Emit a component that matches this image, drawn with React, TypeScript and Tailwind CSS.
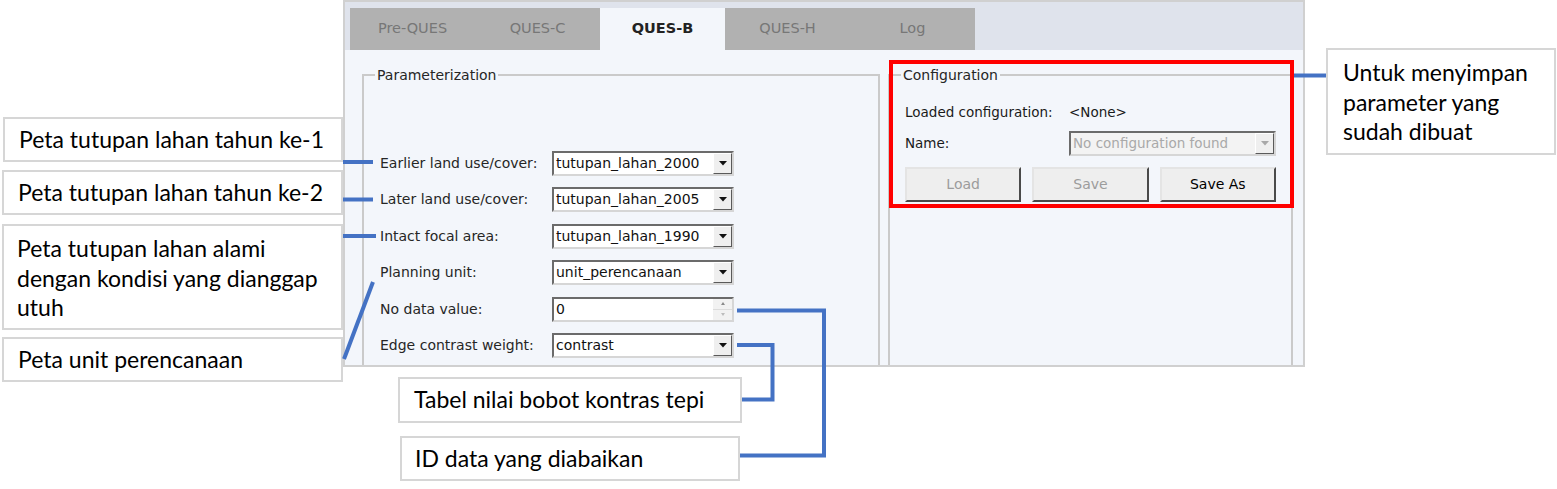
import React from "react";

function Arrow({ disabled }: { disabled?: boolean }) {
  return (
    <svg width="8" height="5" viewBox="0 0 8 5">
      <path d="M0 0H8L4 4.5Z" fill={disabled ? "#a8a8a8" : "#111"} />
    </svg>
  );
}

function Combo({ value, disabled, wide }: { value: string; disabled?: boolean; wide?: boolean }) {
  return (
    <div
      className={`flex h-[25px] border-2 border-t-[#6b6b6b] border-l-[#6b6b6b] border-r-[#d6d6d6] border-b-[#d6d6d6] ${
        wide ? "w-[207px]" : "w-[182px]"
      } ${disabled ? "bg-[#f3f3f3]" : "bg-white"}`}
    >
      <div
        className={`flex-1 pl-[2px] leading-[21px] whitespace-nowrap overflow-hidden ${
          disabled ? "text-[13.5px] text-[#a9a9a9]" : "text-[14px] text-[#111]"
        }`}
      >
        {value}
      </div>
      <div className="w-[19px] h-full flex items-center justify-center bg-[#efefef] border border-t-white border-l-white border-r-[#5a5a5a] border-b-[#5a5a5a]">
        <Arrow disabled={disabled} />
      </div>
    </div>
  );
}

function Spin({ value }: { value: string }) {
  return (
    <div className="flex h-[25px] w-[182px] border-2 border-t-[#6b6b6b] border-l-[#6b6b6b] border-r-[#d6d6d6] border-b-[#d6d6d6] bg-white">
      <div className="flex-1 pl-[2px] leading-[21px] text-[14px] text-[#111]">{value}</div>
      <div className="w-[19px] h-full flex flex-col bg-[#f2f2f2]">
        <div className="flex-1 flex items-center justify-center border-b border-[#dcdcdc]">
          <svg width="4" height="3" viewBox="0 0 4 3">
            <path d="M0 3H4L2 0Z" fill="#8a8a8a" />
          </svg>
        </div>
        <div className="flex-1 flex items-center justify-center">
          <svg width="4" height="3" viewBox="0 0 4 3">
            <path d="M0 0H4L2 3Z" fill="#bdbdbd" />
          </svg>
        </div>
      </div>
    </div>
  );
}

function Row({ label, children }: { label: string; children: React.ReactNode }) {
  return (
    <div className="flex items-center h-[24px]">
      <div className="w-[172px] text-[14px] text-[#262626] whitespace-nowrap">{label}</div>
      {children}
    </div>
  );
}

function Btn({ label, disabled }: { label: string; disabled?: boolean }) {
  return (
    <div
      className={`flex-1 h-[35px] flex items-center justify-center bg-[#eeeeee] border-2 border-t-[#e4e4e4] border-l-[#e4e4e4] border-r-[#4a4a4a] border-b-[#4a4a4a] text-[14px] ${
        disabled ? "text-[#9c9c9c]" : "text-black"
      }`}
    >
      {label}
    </div>
  );
}

const tabs = ["Pre-QUES", "QUES-C", "QUES-B", "QUES-H", "Log"];

export default function App() {
  const callout = "absolute border-2 border-[#d6d6d6] bg-white text-black text-[23px] leading-[29.5px]";
  return (
    <div
      className="relative w-[1557px] h-[489px] bg-white overflow-hidden"
      style={{ fontFamily: "'DejaVu Sans', sans-serif" }}
    >
      {/* Application window */}
      <div className="ml-[343px] w-[962px] h-[367px] border-2 border-[#d0d0d0] flex flex-col">
        <div className="h-[48px] bg-[#dfe3ec] pl-[5px] pt-[6px] flex">
          {tabs.map((t) => (
            <div
              key={t}
              className={`w-[125px] h-[42px] flex items-center justify-center text-[14.5px] ${
                t === "QUES-B" ? "bg-[#f3f6fb] font-bold text-[#222]" : "bg-[#b1b1b1] text-[#777]"
              }`}
            >
              {t}
            </div>
          ))}
        </div>
        <div className="h-[315px] bg-[#f3f6fb] overflow-hidden flex pl-[17px] pt-[17px] gap-[8px]">
          <fieldset className="w-[518px] h-[340px] shrink-0 border-2 border-[#cacaca] px-[11px]">
            <legend className="px-[2px] text-[14px] leading-[16px] text-[#262626]">Parameterization</legend>
            <div className="ml-[5px] mt-[68px] flex flex-col gap-[12.6px]">
              <Row label="Earlier land use/cover:">
                <Combo value="tutupan_lahan_2000" />
              </Row>
              <Row label="Later land use/cover:">
                <Combo value="tutupan_lahan_2005" />
              </Row>
              <Row label="Intact focal area:">
                <Combo value="tutupan_lahan_1990" />
              </Row>
              <Row label="Planning unit:">
                <Combo value="unit_perencanaan" />
              </Row>
              <Row label="No data value:">
                <Spin value="0" />
              </Row>
              <Row label="Edge contrast weight:">
                <Combo value="contrast" />
              </Row>
            </div>
          </fieldset>
          <fieldset className="w-[405px] h-[340px] shrink-0 border-2 border-[#cacaca] px-[11px]">
            <legend className="px-[2px] text-[14px] leading-[16px] text-[#262626]">Configuration</legend>
            <div className="ml-[4px] mr-[4px] flex flex-col">
              <div className="mt-[19px] h-[20px] flex items-center text-[13.5px] text-[#1a1a1a]">
                <div className="w-[164px]">Loaded configuration:</div>
                <div>&lt;None&gt;</div>
              </div>
              <div className="mt-[9px] flex items-center text-[13.5px] text-[#1a1a1a]">
                <div className="w-[164px]">Name:</div>
                <Combo value="No configuration found" disabled wide />
              </div>
              <div className="mt-[11px] flex gap-[11px]">
                <Btn label="Load" disabled />
                <Btn label="Save" disabled />
                <Btn label="Save As" />
              </div>
            </div>
          </fieldset>
        </div>
      </div>

      {/* Red highlight */}
      <div className="absolute left-[889px] top-[60px] w-[405px] h-[148px] border-4 border-[#ff0000]" />

      {/* Callouts */}
      <div style={{ fontFamily: "Lato, 'Noto Sans', sans-serif" }}>
        <div className={`${callout} left-[3px] top-[117px] w-[340px] h-[45px] pl-[14px] flex items-center`}>
          Peta tutupan lahan tahun ke-1
        </div>
        <div className={`${callout} left-[2px] top-[170px] w-[341px] h-[45px] pl-[14px] flex items-center`}>
          Peta tutupan lahan tahun ke-2
        </div>
        <div className={`${callout} left-[2px] top-[224px] w-[341px] h-[106px] pl-[13px] pt-[8px]`}>
          Peta tutupan lahan alami
          <br />
          dengan kondisi yang dianggap
          <br />
          utuh
        </div>
        <div className={`${callout} left-[2px] top-[337px] w-[341px] h-[45px] pl-[14px] flex items-center`}>
          Peta unit perencanaan
        </div>
        <div className={`${callout} left-[1326px] top-[48px] w-[230px] h-[107px] pl-[15px] pt-[8px]`}>
          Untuk menyimpan
          <br />
          parameter yang
          <br />
          sudah dibuat
        </div>
        <div className={`${callout} left-[398px] top-[377px] w-[344px] h-[46px] pl-[14px] flex items-center`}>
          Tabel nilai bobot kontras tepi
        </div>
        <div className={`${callout} left-[400px] top-[436px] w-[340px] h-[45px] pl-[13px] flex items-center`}>
          ID data yang diabaikan
        </div>
      </div>

      {/* Connector lines */}
      <svg className="absolute left-0 top-0 pointer-events-none" width="1557" height="489" viewBox="0 0 1557 489">
        <g stroke="#4472c4" strokeWidth="4" fill="none">
          <path d="M343 162H373" />
          <path d="M343 199.5H373" />
          <path d="M343 236H376" />
          <path d="M344 359L373 282" />
          <path d="M737 345H772.5V399.5H742" />
          <path d="M737 310.5H824V455.5H740" />
          <path d="M1294 75.5H1326" />
        </g>
      </svg>
    </div>
  );
}
